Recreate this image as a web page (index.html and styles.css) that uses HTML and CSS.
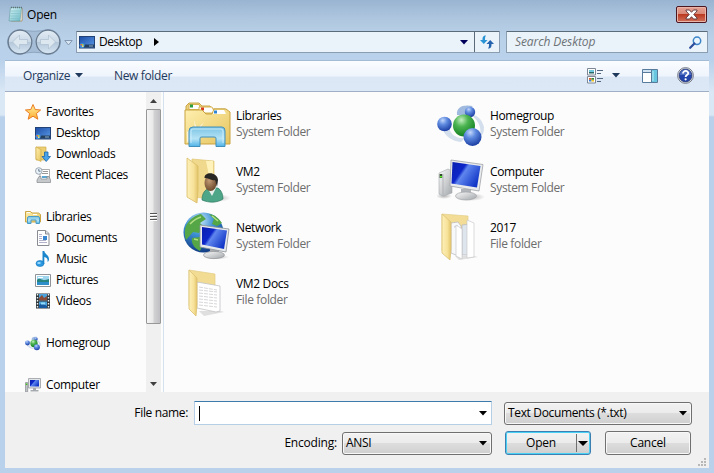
FILE: index.html
```html
<!DOCTYPE html>
<html lang="en">
<head>
<meta charset="utf-8">
<title>Open</title>
<link rel="stylesheet" href="styles.css">
</head>
<body>
<svg class="defs" width="0" height="0" aria-hidden="true">
  <defs>
    <linearGradient id="gold" x1="0" y1="0" x2="1" y2="1"><stop offset="0" stop-color="#fff0b0"/><stop offset="1" stop-color="#e6c45e"/></linearGradient>
    <linearGradient id="goldFlap" x1="0" y1="0" x2="1" y2="0"><stop offset="0" stop-color="#fdf0b8"/><stop offset=".6" stop-color="#f7e29a"/><stop offset="1" stop-color="#e3c468"/></linearGradient>
    <linearGradient id="glass" x1="0" y1="0" x2="0" y2="1"><stop offset="0" stop-color="#7cc3e4"/><stop offset=".6" stop-color="#b5e3f6"/><stop offset="1" stop-color="#4fb2e6"/></linearGradient>
    <linearGradient id="screen" x1="0" y1="0" x2="1" y2=".6"><stop offset="0" stop-color="#0a1fae"/><stop offset=".4" stop-color="#0d26c8"/><stop offset=".5" stop-color="#5f86ee"/><stop offset="1" stop-color="#1338c8"/></linearGradient>
    <linearGradient id="desk" x1="0" y1="0" x2="1" y2="1"><stop offset="0" stop-color="#1c4da6"/><stop offset="1" stop-color="#5b9bea"/></linearGradient>
    <linearGradient id="metal" x1="0" y1="0" x2="1" y2="1"><stop offset="0" stop-color="#fafafa"/><stop offset="1" stop-color="#a2a6aa"/></linearGradient>
    <radialGradient id="blueBall" cx=".38" cy=".25" r=".75"><stop offset="0" stop-color="#c3d7fa"/><stop offset=".4" stop-color="#5f8be0"/><stop offset="1" stop-color="#1c3fa4"/></radialGradient>
    <radialGradient id="greenBall" cx=".38" cy=".25" r=".75"><stop offset="0" stop-color="#c4efc0"/><stop offset=".4" stop-color="#4db552"/><stop offset="1" stop-color="#128022"/></radialGradient>
    <radialGradient id="globe" cx=".4" cy=".2" r=".8"><stop offset="0" stop-color="#c9eafc"/><stop offset=".45" stop-color="#3d8fd4"/><stop offset="1" stop-color="#113c86"/></radialGradient>
    <radialGradient id="face" cx=".4" cy=".35" r=".7"><stop offset="0" stop-color="#c29a74"/><stop offset="1" stop-color="#674528"/></radialGradient>
    <radialGradient id="shade"><stop offset="0" stop-color="#777" stop-opacity=".55"/><stop offset="1" stop-color="#777" stop-opacity="0"/></radialGradient>
    <linearGradient id="orb" x1="0" y1="0" x2="0" y2="1"><stop offset="0" stop-color="#e2ecf5"/><stop offset=".48" stop-color="#cbd9e7"/><stop offset=".52" stop-color="#b4c8db"/><stop offset="1" stop-color="#d8e6f3"/></linearGradient>
    <linearGradient id="star" x1="0" y1="0" x2="0" y2="1"><stop offset="0" stop-color="#fff3a0"/><stop offset="1" stop-color="#fcab30"/></linearGradient>
    <linearGradient id="note" x1="0" y1="0" x2="1" y2="1"><stop offset="0" stop-color="#d5f3f6"/><stop offset="1" stop-color="#6bbac6"/></linearGradient>

    <symbol id="i-desktop" viewBox="0 0 16 16">
      <rect x=".5" y="2.5" width="15" height="11.5" fill="url(#desk)" stroke="#224277"/>
      <path d="M6 10.500h9v3H4z" fill="#26405f"/><path d="M10 11.500h4v1h-4z" fill="#8fb1d2"/>
      <circle cx="3" cy="11.500" r="2.500" fill="#3c8ee0"/><path d="M1.500 10h1.500v1.500H1.500z" fill="#f26a3c"/><path d="M3 10h1.500v1.500H3z" fill="#9ed24a"/><path d="M3 11.500h1.500V13H3z" fill="#ffe067"/>
    </symbol>
    <symbol id="i-homegroup" viewBox="0 0 48 48">
      <path d="M32 14c7 0 13 5 15 13 0 5-1 8-4 9 2-9-2-17-11-22zM6 30c3 7 9 11 18 12l4-4c-8 1-14-3-16-10z" fill="#c9d7e8" opacity=".8"/>
      <path d="M20 15c-1-8 6-11 16-9l-6 4-2 6z" fill="#9fbade"/>
      <circle cx="33" cy="12" r="5.200" fill="url(#blueBall)"/><circle cx="7.500" cy="24" r="7.300" fill="url(#blueBall)"/>
      <circle cx="27" cy="25.500" r="11" fill="url(#greenBall)"/><circle cx="35.500" cy="37" r="9" fill="url(#blueBall)"/>
    </symbol>
    <symbol id="i-computer" viewBox="0 0 48 48">
      <ellipse cx="34" cy="41" rx="14" ry="4" fill="url(#shade)"/><ellipse cx="7" cy="40" rx="8" ry="3" fill="url(#shade)"/>
      <path d="M2 17l9-4 4 2v22l-9 3-4-2z" fill="url(#metal)" stroke="#a5a9ad" stroke-width=".6"/>
      <path d="M6 18v21" stroke="#a4a8ac" stroke-width=".7"/><rect x="2.600" y="18" width="2.600" height="4" fill="#2d4c27"/><path d="M3 20h2v1.500H3z" fill="#59f029"/>
      <path d="M24 33h10v7H24z" fill="#b1b5b9"/>
      <ellipse cx="29" cy="40" rx="10.500" ry="4" fill="url(#metal)" stroke="#a0a4a8" stroke-width=".7"/>
      <path d="M14 4l32 4.500-4 26.500-29-5z" fill="#e9ebec" stroke="#9ea2a7" stroke-width=".8"/>
      <path d="M15.500 6l28 4-3.500 21.500-25.500-4z" fill="url(#screen)"/>
    </symbol>
    <symbol id="i-computer-small" viewBox="0 0 16 16">
      <path d="M.5 5.500h2.200V15H.5z" fill="#bfc3c6" stroke="#8a8e92" stroke-width=".7"/><path d="M.8 6.500h1.500V8H.8z" fill="#43c81f"/>
      <path d="M3.500 1.500h12v9.500h-12z" fill="#e3e6e9" stroke="#999da2" stroke-width=".8"/><path d="M5 3h9v6.500H5z" fill="url(#screen)"/><path d="M8 11h3v2h2.500v1.500h-8V13H8z" fill="#a6aaaf"/>
    </symbol>
    <symbol id="i-libraries" viewBox="0 0 48 48">
      <path d="M3 40V6l3-3h10l3 3h8l2 3h13l4 3v28q0 3-3 3H5z" fill="#ecd07a" stroke="#c9a64a"/>
      <path d="M6 4.500h10l2 5H6z" fill="#fff" stroke="#d8b350"/><rect x="7" y="4.500" width="3" height="3" fill="#2e9e3d"/>
      <path d="M16 7h13l3 6H16z" fill="#fff" stroke="#d8b350"/><rect x="18" y="7.500" width="3" height="3" fill="#d8381c"/>
      <path d="M2 10h17l4 4h6l2-5h12l4 3v32H2z" fill="url(#gold)" stroke="#c9a340"/>
      <path d="M31 10h10l2 4H30z" fill="#fff"/><rect x="31" y="10.500" width="3" height="3" fill="#3086d5"/>
      <path d="M4 42.500V32L7 29h5L11 20l3 9 7-7-5 8 8 1z" fill="#fff" opacity=".65"/>
      <path d="M6 46.500V31q0-4 4-4h29q3 0 3 4v15.500h-9V38q0-1-2-1H19q-2 0-2 1v8.500z" fill="url(#glass)" stroke="#418fbb"/>
      <path d="M8 43V31q0-2 2-2h28q2 0 2 2v12" fill="none" stroke="#d4f3ff" opacity=".8"/>
    </symbol>
    <symbol id="i-libraries-small" viewBox="0 0 16 16">
      <path d="M.5 13V2.500h5L7 4h6.500l2 1.500V13z" fill="url(#gold)" stroke="#c9a544"/><path d="M2 3h3v1H2zM8 5h4v1H8z" fill="#fff"/>
      <path d="M2.500 14.500V9q0-1.500 1.500-1.500h9q1.500 0 1.500 1.500v5.500H11V11H6v3.500z" fill="url(#glass)" stroke="#4b9cc6"/>
    </symbol>
    <symbol id="i-downloads" viewBox="0 0 16 16">
      <path d="M1 1h10V14H1z" fill="#edcf72" stroke="#d0ac4c" stroke-width=".7"/><path d="M1 1l5 2.500v12L1 13z" fill="url(#gold)" stroke="#d0ac4c" stroke-width=".7"/>
      <path d="M9.500 6h3.500v4.500h2.500l-4.300 5-4.200-5h2.500z" fill="#4aa3e8" stroke="#1a65ac" stroke-width=".8"/>
    </symbol>
    <symbol id="i-recent" viewBox="0 0 16 16">
      <path d="M5 2.500h9.500v10H5z" fill="#fff" stroke="#999" stroke-width=".8"/><path d="M8 4.500h5M7 6.500h6" stroke="#999"/><path d="M7 9h6v2H7z" fill="#5aa6d3"/>
      <path d="M2 13l2-3.500h2V12h6V9.500h2l1.500 3.500v2.500H2z" fill="#c6c9cc" stroke="#85898e" stroke-width=".7"/>
      <circle cx="3.800" cy="4" r="3.300" fill="#eaf1f7" stroke="#8a98a5" stroke-width=".8"/><path d="M3.800 2v2.200h1.800" fill="none" stroke="#46617b" stroke-width=".8"/>
    </symbol>
    <symbol id="i-document" viewBox="0 0 16 16">
      <path d="M2.500.5h8l3.500 3v12H2.500z" fill="#fff" stroke="#898d92"/><path d="M10.500.5V4H14" fill="#dfe3e8" stroke="#898d92"/>
      <path d="M4 4.500h3M4 6.500h3M4 8.500h3M4 10.500h7M4 12.500h8" stroke="#a9a9c4" stroke-width=".9"/><path d="M8 6h4v4H8z" fill="#3a86cf"/>
    </symbol>
    <symbol id="i-music" viewBox="0 0 16 16">
      <ellipse cx="5" cy="12.500" rx="4" ry="3" fill="#2c9be2" stroke="#1673b8" stroke-width=".6"/><ellipse cx="4" cy="12" rx="1.800" ry="1" fill="#9cdcff"/>
      <path d="M7.500 13V0h1.800c0 3 5 4 4.700 8.500-.1 1-.6 2-1.500 2.500.5-3-.5-4.500-3.200-5v7z" fill="#1c86cd"/>
    </symbol>
    <symbol id="i-picture" viewBox="0 0 16 16">
      <path d="M.5 2.500h15v12H.5z" fill="#fff" stroke="#8f9296"/><path d="M2 4h12v9H2z" fill="#9fd6ee"/><path d="M2 8c3-3 5 1 8 0 2 0 3-1 4-1v3H2z" fill="#26837e"/><path d="M2 10h12v3H2z" fill="#2d8ec9"/><path d="M3 5.500h5" stroke="#fff"/>
    </symbol>
    <symbol id="i-video" viewBox="0 0 16 16">
      <path d="M1 .5h14v15H1z" fill="#30383d"/><path d="M4 1h8v6.500H4zM4 8.500h8V15H4z" fill="#4aa3dc"/><path d="M4 5l3-3 2 3 3-2v4.500H4z" fill="#8a4b38"/><path d="M4 12l3-2 5 3v2H4z" fill="#185aa0"/><path d="M6 9.500h4v2H6z" fill="#93dcfa"/>
      <path d="M2.500 1v14M13.500 1v14" stroke="#eef3f5" stroke-width="1.400" stroke-dasharray="1.400 1.600"/>
    </symbol>
    <symbol id="i-user-folder" viewBox="0 0 48 48">
      <ellipse cx="33" cy="42" rx="15" ry="4" fill="url(#shade)"/>
      <path d="M9 3l22 2v38L9 41z" fill="#f0d88c" stroke="#dfc777" stroke-width=".7"/><path d="M23 5h7v35" fill="#fff2ba"/>
      <path d="M4 2l11 8v24l-1 13L4 41z" fill="url(#goldFlap)" stroke="#dabd66" stroke-width=".8"/>
      <path d="M19 44c0-7 3-10 7-12h9c3 2 5 6 5 11-6 4-14 4-21 1z" fill="#4ea688" stroke="#2c7a61" stroke-width=".7"/><path d="M25 33l4 7 4-8z" fill="#e8f0ed"/>
      <ellipse cx="27.500" cy="27" rx="6" ry="8" fill="url(#face)"/><path d="M21.500 22c0-7 13-6 13.500 2l-1 7c-1-3-1-5-2-7-4 1-6-2-10.500-2z" fill="#292724"/>
    </symbol>
    <symbol id="i-network" viewBox="0 0 48 48">
      <circle cx="20.500" cy="20.500" r="20" fill="url(#globe)"/>
      <path d="M4 12C8 6 13 3 18 2l5 5-6 4 4 4-5 6-6-1-7 8C1 21 2 15 4 12zM26 2c7 1 10 5 13 9l-5 3-5-2 2-5zM9 26l8-1 4 5-4 9c-6-3-9-8-8-13z" fill="#55a646"/>
      <path d="M7 12c4-4 7-6 11-7M29 4l6 5M11 27l4 1" stroke="#b1df82" stroke-width="1.500" fill="none"/>
      <ellipse cx="33" cy="45" rx="13" ry="2.500" fill="url(#shade)"/><path d="M27 34h9v8h-9z" fill="#a9adb1"/><ellipse cx="31" cy="43" rx="10.500" ry="3.600" fill="url(#metal)" stroke="#909498" stroke-width=".7"/>
      <path d="M17 13l29 4-3 23-26-5z" fill="#e7eaec" stroke="#8c9298" stroke-width=".8"/><path d="M19 15l25 3.500-3 18.500-22-4.500z" fill="url(#screen)"/>
    </symbol>
    <symbol id="i-folder-pages" viewBox="0 0 48 48">
      <path d="M18 44h19l4 1-19 3z" fill="#aaa" opacity=".35"/>
      <path d="M5 2l26 2v36l-26-1z" fill="#f3dd96" stroke="#e3ce88" stroke-width=".7"/>
      <path d="M14 11l7-1 3 4v31l-10-4z" fill="#f7f8fa" stroke="#b4b6ba" stroke-width=".7"/><path d="M17 15l3-1v27" fill="none" stroke="#d3d7de" stroke-width="1.500"/>
      <path d="M25 13l8-1v31h-8z" fill="#dfe5ed" stroke="#b4b6ba" stroke-width=".7"/>
      <path d="M19 13l6 4v30l-6-3zM30 8l7 3v34l-7 1z" fill="#fff" stroke="#c3c3c6" stroke-width=".6"/>
      <path d="M5 2l9 8v27l-1 11L5 41z" fill="url(#goldFlap)" stroke="#dcc174" stroke-width=".8"/>
    </symbol>
    <symbol id="i-folder-docs" viewBox="0 0 48 48">
      <path d="M16 43h22l3 1-20 4z" fill="#aaa" opacity=".35"/>
      <path d="M6 2l26 4v34L6 38z" fill="#f2dc94" stroke="#e2cc84" stroke-width=".7"/>
      <path d="M14 14l23 4v25l-4 1-19-4z" fill="#fff" stroke="#c0c2c5" stroke-width=".8"/>
      <path d="M16 19l18 3M16 22l18 2M16 25l18 2M16 28l18 2M16 31l18 2M16 34l18 2M16 37l18 2" stroke="#cbccd0" stroke-width=".8" stroke-dasharray="4 1"/>
      <path d="M6 2l8 8v27l-1 11-7-7z" fill="url(#goldFlap)" stroke="#dcc174" stroke-width=".8"/>
    </symbol>
  </defs>
</svg>

<div class="window">
  <header class="titlebar">
    <svg class="app-icon" width="16" height="17" viewBox="0 0 16 17"><path d="M3 2h11v13H3z" fill="#fff" stroke="#a07b3c" stroke-width=".7"/><path d="M2.500 1.500h11L12 15H1z" fill="url(#note)" stroke="#6da2ab" stroke-width=".7"/><path d="M3 5h9M3 7.500h9M2.500 10h9M2.500 12.500h9" stroke="#7fbcc6" stroke-width=".6"/><path d="M3 1.500h11" stroke="#5d7176" stroke-width="1.500" stroke-dasharray="1 1"/></svg>
    <span class="title">Open</span>
    <button class="close" aria-label="Close"><svg width="13" height="11" viewBox="0 0 13 11"><path d="M1 1h3.500l2 2.300L8.500 1H12v1L8.800 5.500 12 9v1H8.500l-2-2.300-2 2.300H1V9l3.200-3.500L1 2z" fill="#fff" stroke="#57333a" stroke-width=".9"/></svg></button>
  </header>

  <nav class="navbar">
    <svg class="orbs" width="56" height="28" viewBox="0 0 56 28">
      <path d="M14 1.500Q28 5 42 1.500A12.500 12.500 0 0 1 42 26.500Q28 22 14 26.500A12.500 12.500 0 0 1 14 1.500z" fill="#a5bdd6" stroke="#8ea6c0"/>
      <circle cx="14" cy="14" r="11.800" fill="url(#orb)" stroke="#66788c" stroke-width="1.200"/><circle cx="42" cy="14" r="11.800" fill="url(#orb)" stroke="#66788c" stroke-width="1.200"/>
      <path d="M6.500 14l7-7v4.500h8v5h-8V21z" fill="#dce7f0" stroke="#adbfd0" stroke-width=".7"/><path d="M49.500 14l-7-7v4.500h-8v5h8V21z" fill="#dce7f0" stroke="#adbfd0" stroke-width=".7"/>
    </svg>
    <svg class="history" width="9" height="6" viewBox="0 0 9 6"><path d="M.8.5h7.400L4.500 5z" fill="#d8e6f4" stroke="#8499b1"/></svg>
    <div class="address">
      <svg width="16" height="16"><use href="#i-desktop"/></svg>
      <span class="crumb">Desktop</span>
      <svg class="crumb-arrow" width="5" height="8" viewBox="0 0 5 8"><path d="M0 0l5 4-5 4z" fill="#000"/></svg>
      <svg class="address-arrow" width="8" height="5" viewBox="0 0 8 5"><path d="M0 0h8L4 4.500z" fill="#00005a"/></svg>
      <div class="refresh"><svg width="14" height="14" viewBox="0 0 14 14"><path d="M6 .5C3 .5 2.500 2 2.500 5H0L3.800 9l3.700-4H5c0-2 0-3 1-4.500z" fill="#2994d3"/><path d="M8 13.500c3 0 3.500-1.500 3.500-4.500H14L10.200 5 6.500 9H9c0 2 0 3-1 4.500z" fill="#2463ae"/></svg></div>
    </div>
    <div class="search">
      <span class="search-text">Search Desktop</span>
      <svg width="13" height="13" viewBox="0 0 13 13"><circle cx="8" cy="4.800" r="3.700" fill="#e8f5ff" stroke="#3b84c8" stroke-width="1.500"/><path d="M5.400 7.500L1.200 11.800" stroke="#2c4d9b" stroke-width="2.200" stroke-linecap="round"/></svg>
    </div>
  </nav>

  <div class="client">
    <div class="toolbar">
      <span class="tool organize">Organize</span>
      <svg class="tool-arrow" width="8" height="5" viewBox="0 0 8 5"><path d="M0 0h8L4 4.500z" fill="#1e395b"/></svg>
      <span class="tool new-folder">New folder</span>
      <svg class="views" width="17" height="16" viewBox="0 0 17 16"><path d="M.5.500h8v6.500h-8zM.5 8.500h8V15h-8z" fill="#fff" stroke="#7d8795"/><path d="M2 2h5v2H2z" fill="#6fc6df"/><path d="M2 4h5v1.500H2z" fill="#276765"/><path d="M2 10h2.500v1.800H2z" fill="#e25821"/><path d="M4.500 10H7v1.800H4.500z" fill="#318337"/><path d="M2 11.800h2.500v1.700H2z" fill="#367fdc"/><path d="M4.500 11.800H7v1.700H4.500z" fill="#eec31e"/><path d="M10 2.500h6M10 5.500h4M10 10.500h6M10 13.500h4" stroke="#546880"/></svg>
      <svg class="views-arrow" width="8" height="5" viewBox="0 0 8 5"><path d="M0 0h8L4 4.500z" fill="#1e395b"/></svg>
      <svg class="preview" width="16" height="14" viewBox="0 0 16 14"><path d="M.5.500h15v13H.5z" fill="#fff" stroke="#597b9b"/><path d="M1 1h14v2H1z" fill="#d1e2f2"/><path d="M10 1h5v12h-5z" fill="#69c6df"/><path d="M9.500 1v12M1 3.500h8.500" stroke="#597b9b"/><path d="M11 2v10" stroke="#b9ebf5"/></svg>
      <svg class="help" width="17" height="17" viewBox="0 0 17 17"><circle cx="8.500" cy="8.500" r="7.900" fill="#d8dce4" stroke="#777e8b"/><circle cx="8.500" cy="8.500" r="6.400" fill="#2344aa" stroke="#29376b" stroke-width=".7"/><path d="M3 8a5.500 5.500 0 0 1 11 0z" fill="#6685cf" opacity=".7"/><path d="M6 6.500C6 3 11.400 3.300 11.200 6.300 11 8 8.600 8 8.600 10" fill="none" stroke="#fff" stroke-width="1.800"/><circle cx="8.600" cy="12.300" r="1.100" fill="#fff"/></svg>
    </div>

    <div class="browser">
      <aside class="sidebar">
        <div class="node"><svg width="16" height="16" viewBox="0 0 16 16"><path d="M8 .5l2.200 5 5.400.5-4.200 3.500 1.400 5.700L8 12.200l-4.800 3 1.400-5.700L.4 6l5.400-.5z" fill="url(#star)" stroke="#ea7c22"/></svg>Favorites</div>
        <div class="node child"><svg width="16" height="16"><use href="#i-desktop"/></svg>Desktop</div>
        <div class="node child"><svg width="16" height="16"><use href="#i-downloads"/></svg>Downloads</div>
        <div class="node child"><svg width="16" height="16"><use href="#i-recent"/></svg>Recent Places</div>
        <div class="node group"><svg width="16" height="16"><use href="#i-libraries-small"/></svg>Libraries</div>
        <div class="node child"><svg width="16" height="16"><use href="#i-document"/></svg>Documents</div>
        <div class="node child"><svg width="16" height="16"><use href="#i-music"/></svg>Music</div>
        <div class="node child"><svg width="16" height="16"><use href="#i-picture"/></svg>Pictures</div>
        <div class="node child"><svg width="16" height="16"><use href="#i-video"/></svg>Videos</div>
        <div class="node group"><svg width="16" height="16"><use href="#i-homegroup"/></svg>Homegroup</div>
        <div class="node group"><svg width="16" height="16"><use href="#i-computer-small"/></svg>Computer</div>
      </aside>
      <div class="scrollbar">
        <div class="scroll-button"><svg width="7" height="4" viewBox="0 0 7 4"><path d="M0 4h7L3.500 0z" fill="#404040"/></svg></div>
        <div class="thumb"><svg width="7" height="8" viewBox="0 0 7 8"><path d="M0 .5h7M0 3.500h7M0 6.500h7" stroke="#555"/><path d="M0 1.500h7M0 4.500h7M0 7.500h7" stroke="#fff"/></svg></div>
        <div class="scroll-button"><svg width="7" height="4" viewBox="0 0 7 4"><path d="M0 0h7L3.500 4z" fill="#404040"/></svg></div>
      </div>
      <main class="files">
        <div class="file"><svg width="48" height="48"><use href="#i-libraries"/></svg><div><div class="name">Libraries</div><div class="kind">System Folder</div></div></div>
        <div class="file"><svg width="48" height="48"><use href="#i-homegroup"/></svg><div><div class="name">Homegroup</div><div class="kind">System Folder</div></div></div>
        <div class="file"><svg width="48" height="48"><use href="#i-user-folder"/></svg><div><div class="name">VM2</div><div class="kind">System Folder</div></div></div>
        <div class="file"><svg width="48" height="48"><use href="#i-computer"/></svg><div><div class="name">Computer</div><div class="kind">System Folder</div></div></div>
        <div class="file"><svg width="48" height="48"><use href="#i-network"/></svg><div><div class="name">Network</div><div class="kind">System Folder</div></div></div>
        <div class="file"><svg width="48" height="48"><use href="#i-folder-pages"/></svg><div><div class="name">2017</div><div class="kind">File folder</div></div></div>
        <div class="file"><svg width="48" height="48"><use href="#i-folder-docs"/></svg><div><div class="name">VM2 Docs</div><div class="kind">File folder</div></div></div>
      </main>
    </div>

    <footer class="footer">
      <div class="row">
        <span class="label">File name:</span>
        <div class="filename"><span class="caret"></span><svg width="8" height="5" viewBox="0 0 8 5"><path d="M0 0h8L4 4.500z"/></svg></div>
        <div class="combo type">Text Documents (*.txt)<svg width="8" height="5" viewBox="0 0 8 5"><path d="M0 0h8L4 4.500z"/></svg></div>
      </div>
      <div class="row second">
        <span class="label">Encoding:</span>
        <div class="combo encoding">ANSI<svg width="8" height="5" viewBox="0 0 8 5"><path d="M0 0h8L4 4.500z"/></svg></div>
        <div class="button open"><span class="open-text">Open</span><span class="split"><svg width="10" height="5" viewBox="0 0 10 5"><path d="M0 0h10L5 5z"/></svg></span></div>
        <div class="button cancel">Cancel</div>
      </div>
      <svg class="grip" width="9" height="9" viewBox="0 0 9 9"><path d="M6 0h2v2H6zM3 3h2v2H3zM6 3h2v2H6zM0 6h2v2H0zM3 6h2v2H3zM6 6h2v2H6z" fill="#b8b8b8"/></svg>
    </footer>
  </div>
</div>
</body>
</html>
```
FILE: styles.css
```css
* { box-sizing: border-box; }
body { margin: 0; font: 12px/16px "Open Sans", "Noto Sans", sans-serif; letter-spacing: -0.35px; color: #000; }
svg { display: block; flex: none; }
.defs { position: absolute; }

.window {
  width: 714px; height: 473px; overflow: hidden;
  display: flex; flex-direction: column;
  background: linear-gradient(#99b4d1 0, #b0c7e0 20px, #bad1ea 40px, #b9d1ea 60px, #dae7f5 92px, #dae7f5 115px, #b9d1ea 117px);
}

.titlebar { height: 28px; display: flex; align-items: flex-start; padding: 6px 7px 0 8px; }
.title { margin: 1px 0 0 3px; letter-spacing: -0.2px; }
.close {
  margin-left: auto; width: 31px; height: 17px; padding: 0;
  display: flex; align-items: center; justify-content: center;
  border: 1px solid #4c1721; border-radius: 2px;
  background: linear-gradient(#e6a294 0, #d98978 45%, #bc3a22 50%, #cf715b 100%);
  box-shadow: inset 0 0 0 1px #e9b5a9;
}

.navbar { height: 32px; display: flex; align-items: flex-start; padding-left: 6px; }
.history { margin: 12px 4px 0 2px; }
.address, .search {
  margin-top: 3px; height: 22px; display: flex; align-items: center;
  background: #eaf2fa; border: 1px solid #8b9db1; border-top-color: #5c6b7a; border-radius: 1px;
}
.address { width: 424px; margin-left: -1px; padding-left: 2px; }
.crumb { margin-left: 4px; letter-spacing: -0.45px; }
.crumb-arrow { margin-left: 12px; }
.address-arrow { margin-left: auto; margin-right: 6px; }
.refresh { width: 25px; height: 20px; display: flex; align-items: center; justify-content: center; border-left: 1px solid #5c6b7a; }
.search { width: 202px; margin-left: 6px; padding: 0 5px 0 8px; justify-content: space-between; }
.history, .address, .search { flex: none; }
.search-text { font-style: italic; color: #6d7276; letter-spacing: -0.1px; }

.client { margin: 0 5px; height: 408px; display: flex; flex-direction: column; }
.toolbar {
  height: 32px; display: flex; align-items: center; padding: 0 15px 1px 18px;
  color: #1e395b;
  background: linear-gradient(#fafcff 0, #eff5fd 15px, #dce7f5 16px, #dde8f6 100%);
  border-top: 1px solid #a4bbd5; border-bottom: 1px solid #a0afc3;
}
.organize { letter-spacing: -0.4px; }
.tool-arrow { margin-left: 5px; }
.new-folder { margin-left: 31px; }
.views { margin-left: auto; }
.views-arrow { margin-left: 8px; }
.preview { margin-left: 22px; }
.help { margin-left: 19px; }

.browser { height: 300px; display: flex; background: #fcfcfc; }
.sidebar { width: 141px; padding-top: 9px; overflow: hidden; }
.node { height: 21px; display: flex; align-items: center; gap: 5px; padding-left: 20px; white-space: nowrap; }
.child { padding-left: 30px; }
.group { margin-top: 21px; }
.scrollbar { width: 15px; display: flex; flex-direction: column; background: #f0f0f0; }
.scroll-button { height: 17px; display: flex; align-items: center; justify-content: center; }
.thumb {
  height: 215px; margin-bottom: auto;
  display: flex; align-items: center; justify-content: center;
  border: 1px solid #979797; border-radius: 1px;
  background: linear-gradient(90deg, #f5f5f5 0, #e9e9ea 45%, #d2d2d4 55%, #c0c0c4 100%);
}
.files {
  flex: 1; margin-left: 2px; padding: 4px 0 0 19px; border-left: 1px solid #d6e1f0;
  display: grid; grid-template-columns: 254px 254px; grid-auto-rows: 56px;
}
.file { display: flex; align-items: center; gap: 5px; }
.kind { color: #6d6d6d; }

.footer { position: relative; height: 76px; padding-top: 9px; background: #f0f0f0; }
.row { height: 24px; display: flex; align-items: center; justify-content: flex-end; padding-right: 17px; }
.second { margin-top: 6px; padding-right: 18px; }
.filename {
  width: 298px; height: 24px; margin: 0 12px 0 6px; padding: 0 4px;
  display: flex; align-items: center; justify-content: space-between;
  background: #fff; border: 1px solid #b5cfe7; border-top-color: #3d7bad; border-radius: 1px;
}
.caret { width: 1px; height: 15px; background: #000; }
.combo, .button {
  height: 23px; display: flex; align-items: center;
  border: 1px solid #707070; border-radius: 3px;
  background: linear-gradient(#f2f2f2 0, #ebebeb 50%, #dddddd 50%, #cfcfcf 100%);
  box-shadow: inset 0 0 0 1px #f8f8f8;
}
.combo { justify-content: space-between; padding: 0 4px 0 3px; }
.type { width: 188px; }
.encoding { width: 150px; margin: 0 13px 0 5px; }
.second .label, .button { letter-spacing: -0.2px; }
.button { height: 24px; width: 86px; justify-content: center; }
.open { border-color: #3c7fb1; box-shadow: inset 0 0 0 1px #48d1f5; margin-right: 14px; }
.open-text { flex: 1; text-align: center; }
.split { width: 13px; height: 18px; display: flex; align-items: center; justify-content: center; border-left: 1px solid #707070; margin-right: 1px; }
.grip { position: absolute; right: 2px; bottom: 1px; }
```
